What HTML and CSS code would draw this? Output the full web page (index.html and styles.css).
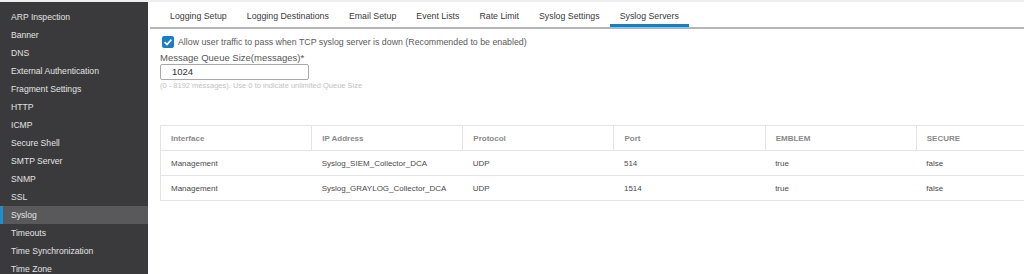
FILE: index.html
```html
<!DOCTYPE html>
<html>
<head>
<meta charset="utf-8">
<link rel="stylesheet" href="styles.css">
</head>
<body>
<div class="topstrip"></div>
<div class="layout">
  <nav class="sidebar">
    <div class="nav-item">ARP Inspection</div>
    <div class="nav-item">Banner</div>
    <div class="nav-item">DNS</div>
    <div class="nav-item">External Authentication</div>
    <div class="nav-item">Fragment Settings</div>
    <div class="nav-item">HTTP</div>
    <div class="nav-item">ICMP</div>
    <div class="nav-item">Secure Shell</div>
    <div class="nav-item">SMTP Server</div>
    <div class="nav-item">SNMP</div>
    <div class="nav-item">SSL</div>
    <div class="nav-item active">Syslog</div>
    <div class="nav-item">Timeouts</div>
    <div class="nav-item">Time Synchronization</div>
    <div class="nav-item">Time Zone</div>
  </nav>
  <main class="main">
    <div class="tabs">
      <div class="tab">Logging Setup</div>
      <div class="tab">Logging Destinations</div>
      <div class="tab">Email Setup</div>
      <div class="tab">Event Lists</div>
      <div class="tab">Rate Limit</div>
      <div class="tab">Syslog Settings</div>
      <div class="tab active">Syslog Servers</div>
    </div>
    <div class="content">
      <label class="check-row">
        <span class="checkbox"><svg viewBox="0 0 12 12" width="12" height="12"><path d="M2.6 6.2 L5 8.5 L9.4 3.6" fill="none" stroke="#fff" stroke-width="1.7"/></svg></span>
        <span class="check-label">Allow user traffic to pass when TCP syslog server is down (Recommended to be enabled)</span>
      </label>
      <div class="field-label">Message Queue Size(messages)*</div>
      <div class="input">1024</div>
      <div class="hint">(0 - 8192 messages). Use 0 to indicate unlimited Queue Size</div>
      <div class="table-wrap">
        <table class="grid">
          <thead>
            <tr><th>Interface</th><th>IP Address</th><th>Protocol</th><th>Port</th><th>EMBLEM</th><th>SECURE</th></tr>
          </thead>
          <tbody>
            <tr><td>Management</td><td>Syslog_SIEM_Collector_DCA</td><td>UDP</td><td>514</td><td>true</td><td>false</td></tr>
            <tr><td>Management</td><td>Syslog_GRAYLOG_Collector_DCA</td><td>UDP</td><td>1514</td><td>true</td><td>false</td></tr>
          </tbody>
        </table>
      </div>
    </div>
  </main>
</div>
</body>
</html>
```

FILE: styles.css
```css
html, body {
  margin: 0;
  padding: 0;
  width: 1024px;
  height: 274px;
  overflow: hidden;
  background: #ffffff;
  font-family: "Liberation Sans", Arial, sans-serif;
}

.topstrip {
  height: 2px;
  background: #eeeeee;
}

.layout {
  display: flex;
  height: 272px;
}

.sidebar {
  width: 148px;
  flex: none;
  background: #3a3a3c;
  padding-top: 6px;
  box-sizing: border-box;
}

.nav-item {
  height: 18px;
  line-height: 18px;
  padding-left: 11px;
  font-size: 8.6px;
  color: #e2e2e2;
  white-space: nowrap;
}

.nav-item.active {
  background: #59595b;
  box-shadow: inset 3px 0 0 #1e8fd0;
}

.main {
  flex: 1;
  min-width: 0;
  padding-left: 2px;
  overflow: hidden;
}

.tabs {
  display: flex;
  height: 25px;
  border-bottom: 2px solid #b5b5b5;
  padding-left: 10px;
}

.tab {
  padding: 0 10px;
  font-size: 8.8px;
  color: #3a3a3a;
  line-height: 28px;
  white-space: nowrap;
}

.tab.active {
  box-shadow: inset 0 -3px 0 #1c7fb8;
}

.content {
  padding: 6px 0 0 10px;
}

.check-row {
  display: flex;
  align-items: center;
  gap: 4px;
  margin-left: 2px;
  height: 13px;
}

.checkbox {
  width: 12px;
  height: 12px;
  border-radius: 2px;
  background: #1b7ec4;
  display: flex;
}

.check-label {
  font-size: 8.8px;
  color: #5a5a5a;
}

.field-label {
  margin-top: 4px;
  font-size: 9.5px;
  color: #555555;
  line-height: 12px;
}

.input {
  margin-top: 0;
  width: 149px;
  height: 16px;
  box-sizing: border-box;
  border: 1px solid #a9a9a9;
  border-radius: 2px;
  font-size: 9.5px;
  color: #333333;
  line-height: 14px;
  padding-left: 11px;
}

.hint {
  margin-top: 1px;
  font-size: 7.5px;
  color: #c2c2c2;
  line-height: 10px;
}

.table-wrap {
  margin-top: 34px;
  width: 1000px;
}

.grid {
  border-collapse: collapse;
  table-layout: fixed;
  width: 908px;
  border: 1px solid #e4e4e4;
}

.grid th,
.grid td {
  box-sizing: border-box;
  width: 151px;
  height: 25px;
  padding: 0 0 0 10px;
  text-align: left;
  font-size: 8px;
  white-space: nowrap;
}

.grid th {
  font-weight: bold;
  color: #8a8a8a;
  border-left: 1px solid #e4e4e4;
  border-bottom: 1px solid #e4e4e4;
}

.grid td {
  color: #4a4a4a;
  border-bottom: 1px solid #e4e4e4;
}
```
